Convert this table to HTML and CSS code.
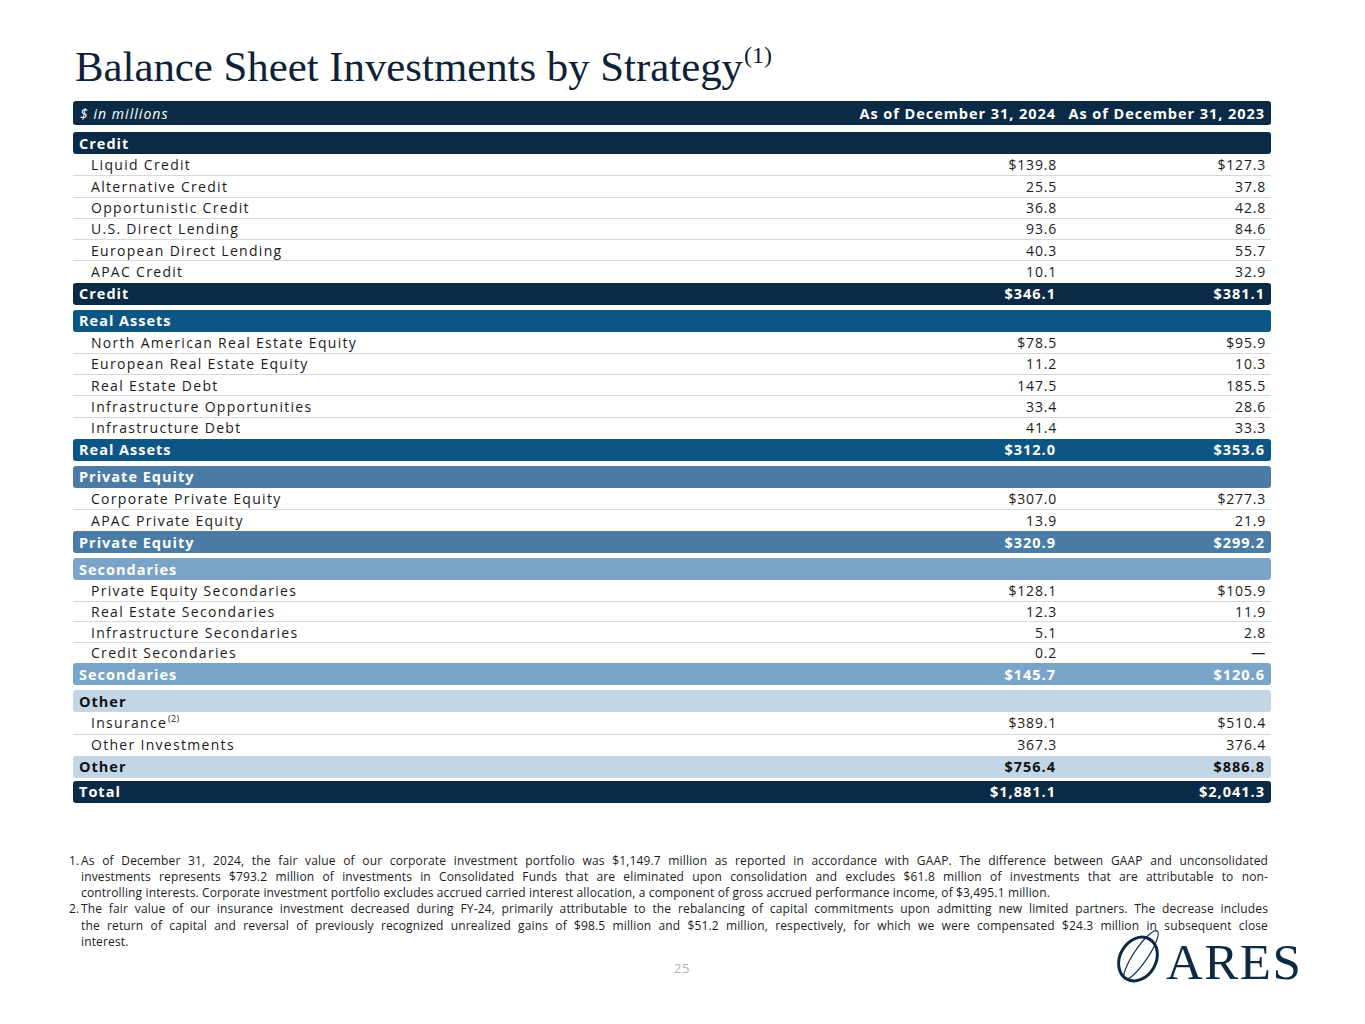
FILE: index.html
```html
<!DOCTYPE html>
<html lang="en">
<head>
<meta charset="utf-8">
<title>Balance Sheet Investments by Strategy</title>
<link rel="stylesheet" href="styles.css">
</head>
<body>
<div class="slide">
  <h1 class="title">Balance Sheet Investments by Strategy<sup>(1)</sup></h1>

  <div class="table">
    <div class="bar head">
      <div class="lbl"><em>$ in millions</em></div>
      <div class="num">As of December 31, 2024</div>
      <div class="num">As of December 31, 2023</div>
    </div>

    <section class="sec s-credit">
      <div class="bar grp"><div class="lbl">Credit</div><div class="num"></div><div class="num"></div></div>
      <div class="row"><div class="lbl">Liquid Credit</div><div class="num">$139.8</div><div class="num">$127.3</div></div>
      <div class="row"><div class="lbl">Alternative Credit</div><div class="num">25.5</div><div class="num">37.8</div></div>
      <div class="row"><div class="lbl">Opportunistic Credit</div><div class="num">36.8</div><div class="num">42.8</div></div>
      <div class="row"><div class="lbl">U.S. Direct Lending</div><div class="num">93.6</div><div class="num">84.6</div></div>
      <div class="row"><div class="lbl">European Direct Lending</div><div class="num">40.3</div><div class="num">55.7</div></div>
      <div class="row"><div class="lbl">APAC Credit</div><div class="num">10.1</div><div class="num">32.9</div></div>
      <div class="bar tot"><div class="lbl">Credit</div><div class="num">$346.1</div><div class="num">$381.1</div></div>
    </section>

    <section class="sec s-real">
      <div class="bar grp"><div class="lbl">Real Assets</div><div class="num"></div><div class="num"></div></div>
      <div class="row"><div class="lbl">North American Real Estate Equity</div><div class="num">$78.5</div><div class="num">$95.9</div></div>
      <div class="row"><div class="lbl">European Real Estate Equity</div><div class="num">11.2</div><div class="num">10.3</div></div>
      <div class="row"><div class="lbl">Real Estate Debt</div><div class="num">147.5</div><div class="num">185.5</div></div>
      <div class="row"><div class="lbl">Infrastructure Opportunities</div><div class="num">33.4</div><div class="num">28.6</div></div>
      <div class="row"><div class="lbl">Infrastructure Debt</div><div class="num">41.4</div><div class="num">33.3</div></div>
      <div class="bar tot"><div class="lbl">Real Assets</div><div class="num">$312.0</div><div class="num">$353.6</div></div>
    </section>

    <section class="sec s-pe">
      <div class="bar grp"><div class="lbl">Private Equity</div><div class="num"></div><div class="num"></div></div>
      <div class="row"><div class="lbl">Corporate Private Equity</div><div class="num">$307.0</div><div class="num">$277.3</div></div>
      <div class="row"><div class="lbl">APAC Private Equity</div><div class="num">13.9</div><div class="num">21.9</div></div>
      <div class="bar tot"><div class="lbl">Private Equity</div><div class="num">$320.9</div><div class="num">$299.2</div></div>
    </section>

    <section class="sec s-sec">
      <div class="bar grp"><div class="lbl">Secondaries</div><div class="num"></div><div class="num"></div></div>
      <div class="row"><div class="lbl">Private Equity Secondaries</div><div class="num">$128.1</div><div class="num">$105.9</div></div>
      <div class="row"><div class="lbl">Real Estate Secondaries</div><div class="num">12.3</div><div class="num">11.9</div></div>
      <div class="row"><div class="lbl">Infrastructure Secondaries</div><div class="num">5.1</div><div class="num">2.8</div></div>
      <div class="row"><div class="lbl">Credit Secondaries</div><div class="num">0.2</div><div class="num">—</div></div>
      <div class="bar tot"><div class="lbl">Secondaries</div><div class="num">$145.7</div><div class="num">$120.6</div></div>
    </section>

    <section class="sec s-other">
      <div class="bar grp"><div class="lbl">Other</div><div class="num"></div><div class="num"></div></div>
      <div class="row"><div class="lbl">Insurance<sup>(2)</sup></div><div class="num">$389.1</div><div class="num">$510.4</div></div>
      <div class="row"><div class="lbl">Other Investments</div><div class="num">367.3</div><div class="num">376.4</div></div>
      <div class="bar tot"><div class="lbl">Other</div><div class="num">$756.4</div><div class="num">$886.8</div></div>
    </section>

    <div class="bar total"><div class="lbl">Total</div><div class="num">$1,881.1</div><div class="num">$2,041.3</div></div>
  </div>

  <ol class="notes">
    <li>
      <span class="ln">As of December 31, 2024, the fair value of our corporate investment portfolio was $1,149.7 million as reported in accordance with GAAP. The difference between GAAP and unconsolidated</span>
      <span class="ln">investments represents $793.2 million of investments in Consolidated Funds that are eliminated upon consolidation and excludes $61.8 million of investments that are attributable to non-</span>
      <span class="ln last">controlling interests. Corporate investment portfolio excludes accrued carried interest allocation, a component of gross accrued performance income, of $3,495.1 million.</span>
    </li>
    <li>
      <span class="ln">The fair value of our insurance investment decreased during FY-24, primarily attributable to the rebalancing of capital commitments upon admitting new limited partners. The decrease includes</span>
      <span class="ln">the return of capital and reversal of previously recognized unrealized gains of $98.5 million and $51.2 million, respectively, for which we were compensated $24.3 million in subsequent close</span>
      <span class="ln last">interest.</span>
    </li>
  </ol>

  <div class="pageno">25</div>

  <div class="logo">
    <svg class="mark" viewBox="0 0 56 60" width="56" height="60" aria-hidden="true">
      <ellipse cx="26" cy="33" rx="18" ry="23" transform="rotate(30 26 33)" fill="none" stroke="#0c2a44" stroke-width="3"/>
      <ellipse cx="29" cy="29" rx="29" ry="7" transform="rotate(-56 29 29)" fill="none" stroke="#0c2a44" stroke-width="1.1"/>
    </svg>
    <span class="word">ARES</span>
  </div>
</div>
</body>
</html>
```

FILE: styles.css
```css
* { box-sizing: border-box; }

html, body {
  margin: 0;
  padding: 0;
  background: #ffffff;
}

.slide {
  position: relative;
  width: 1365px;
  height: 1024px;
  padding: 43px 94px 0 73px;
  font-family: "Open Sans", "Liberation Sans", sans-serif;
  color: #1b1b1b;
}

.title {
  margin: 0 0 10px 2px;
  height: 48px;
  font-family: "Liberation Serif", "Times New Roman", serif;
  font-weight: 400;
  font-size: 42.8px;
  line-height: 48px;
  color: #0d2238;
  white-space: nowrap;
}

.title sup {
  font-size: 24px;
  line-height: 0;
  vertical-align: 0;
  position: relative;
  top: -18px;
  margin-left: 1px;
}

/* table */
.table {
  width: 1198px;
}

.bar,
.row {
  display: grid;
  grid-template-columns: 1fr 212px 209px;
  align-items: center;
}

.bar {
  height: 22px;
  border-radius: 3px;
  color: #ffffff;
  font-weight: 700;
  font-size: 14.5px;
  letter-spacing: 1px;
}

.bar .lbl { padding-left: 6px; }

.num {
  text-align: right;
  padding-right: 6px;
  white-space: nowrap;
}

.head {
  height: 24px;
  background: #0b2a45;
  margin-bottom: 7px;
}

.head .lbl {
  font-weight: 400;
  font-size: 14px;
  letter-spacing: 1.05px;
  padding-left: 7px;
}

.head .num { font-size: 14.5px; letter-spacing: 0.95px; }

.row {
  height: 21.25px;
  font-size: 14px;
  letter-spacing: 1.3px;
  color: #1b1b1b;
}

.row .num { letter-spacing: 0.8px; padding-right: 5px; }

.row + .row { border-top: 1px solid #d8d8d8; }

.row .lbl { padding-left: 18px; white-space: nowrap; }

.row sup {
  font-size: 9px;
  letter-spacing: 0.3px;
  line-height: 0;
  vertical-align: 0;
  position: relative;
  top: -6px;
  margin-left: 1px;
}

.sec { margin-bottom: 5px; }

.sec .tot { margin-top: 1px; }

.s-sec .row { height: 20.5px; }

.s-credit .bar { background: #0b2a45; }
.s-real .bar { background: #0c5686; }
.s-pe .bar { background: #4a7ca6; }
.s-sec .bar { background: #7ba4c9; }
.s-other .bar { background: #c3d6e8; color: #111111; }

.total {
  background: #0b2a45;
  margin-top: -2px;
}

/* footnotes */
.notes {
  margin: 50px 3px 0 0;
  padding: 0 0 0 8px;
  list-style: none;
  counter-reset: fn;
  font-size: 12px;
  letter-spacing: 0.14px;
  line-height: 16.2px;
  color: #1b1b1b;
}

.notes li {
  position: relative;
  counter-increment: fn;
}

.notes li::before {
  content: counter(fn) ".";
  position: absolute;
  left: -12px;
  top: 0;
}

.ln {
  display: block;
  white-space: nowrap;
  text-align: justify;
  text-align-last: justify;
}

.ln.last {
  text-align-last: left;
}

.pageno {
  margin-top: 9px;
  text-align: center;
  padding-left: 20px;
  font-size: 13px;
  color: #b3b3b3;
  letter-spacing: 0.5px;
}

.logo {
  position: absolute;
  left: 1112px;
  top: 926px;
  display: flex;
  align-items: flex-end;
}

.logo .mark { display: block; margin-right: -2px; }

.logo .word {
  font-family: "Liberation Serif", "Times New Roman", serif;
  font-size: 51px;
  line-height: 51px;
  letter-spacing: 1.5px;
  color: #0c2a44;
  margin-bottom: -2px;
}
```
